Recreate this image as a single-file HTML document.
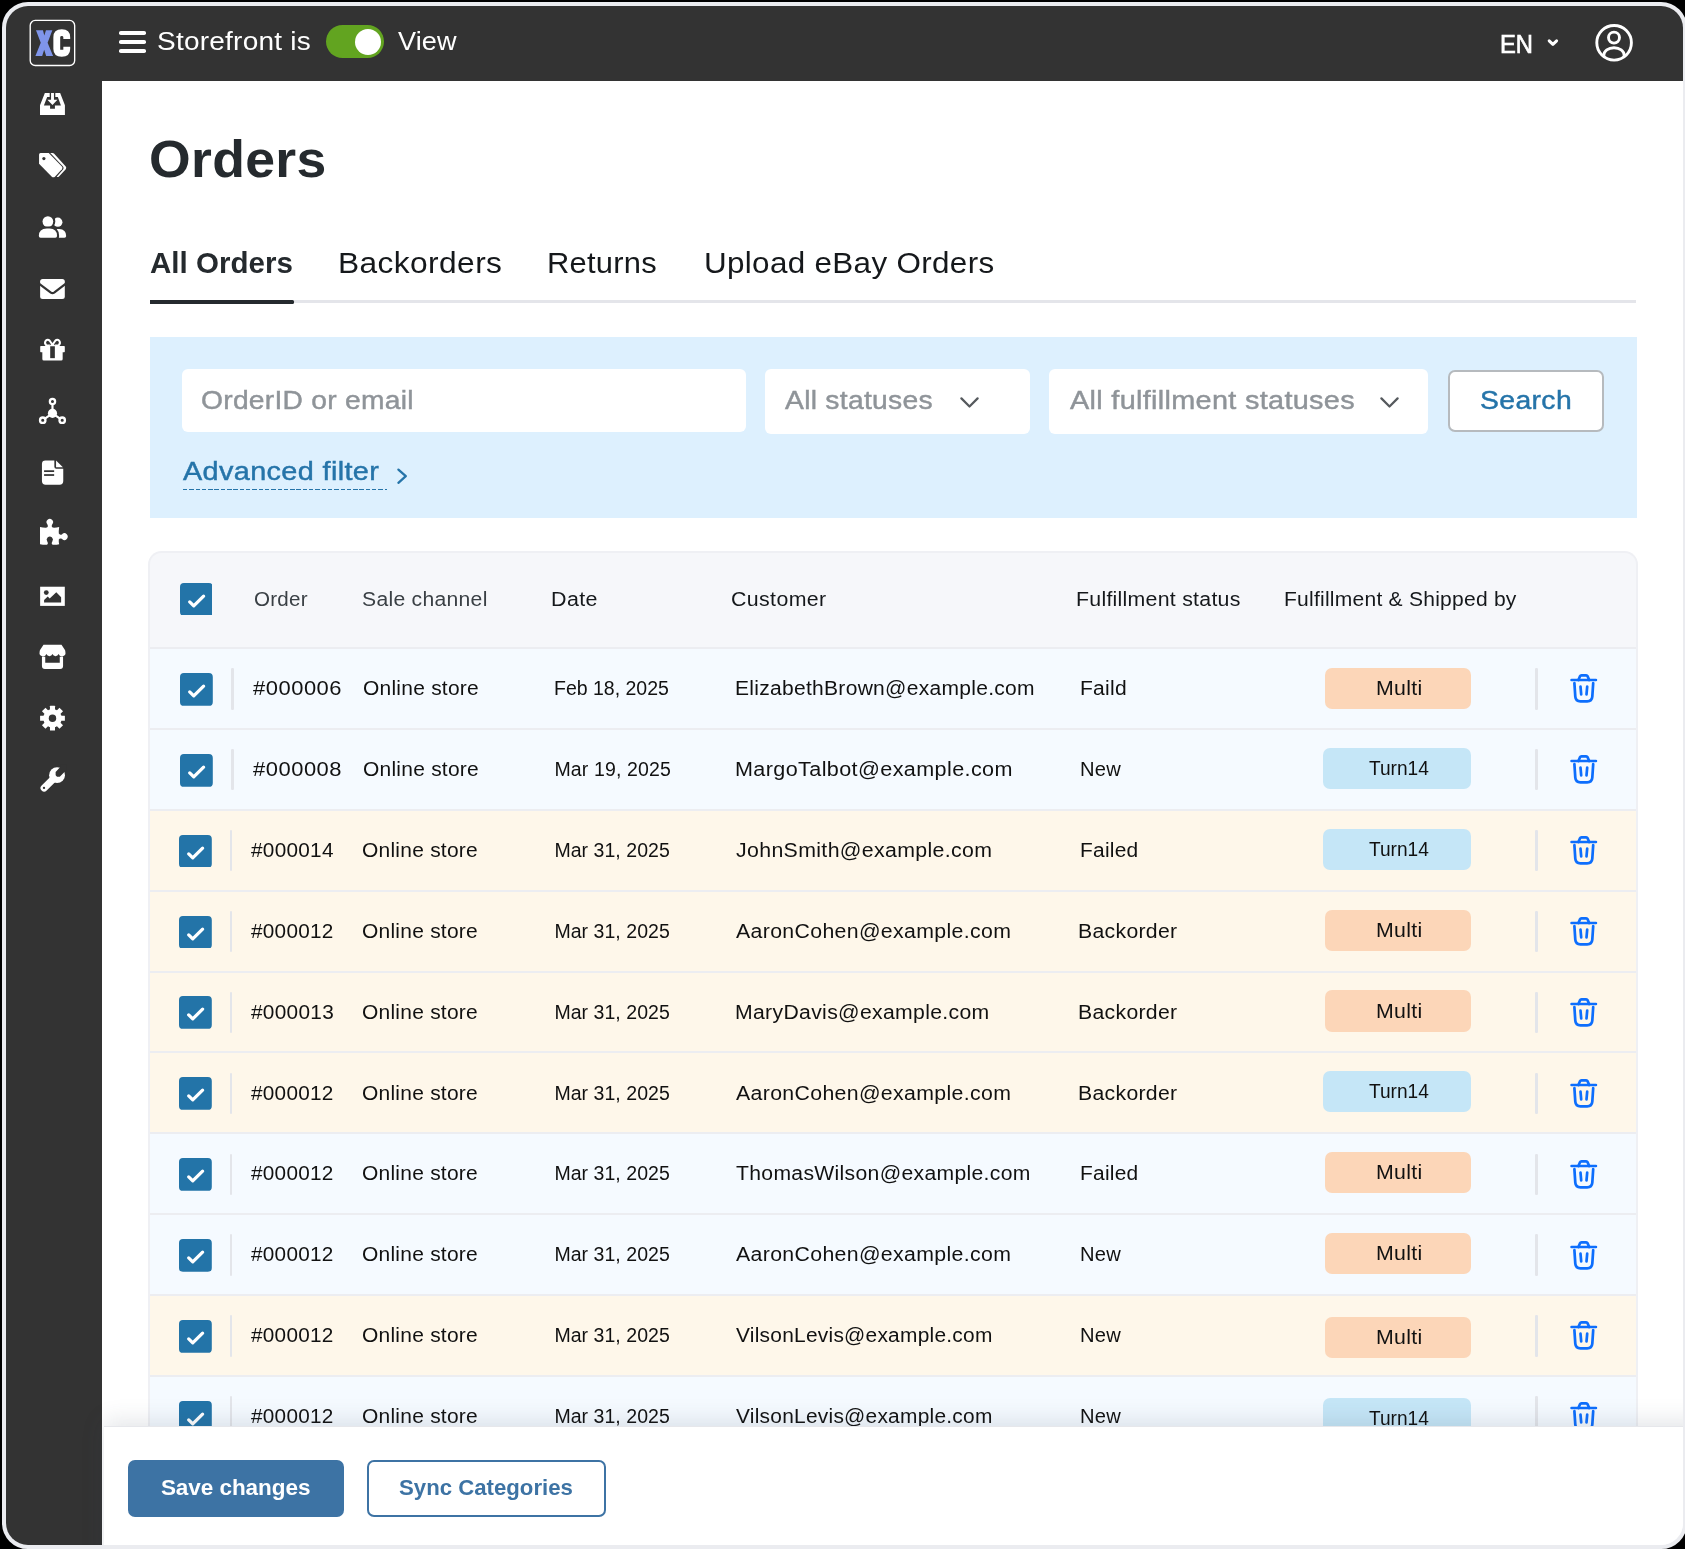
<!DOCTYPE html><html><head><meta charset="utf-8"><title>Orders</title><style>
html,body{margin:0;padding:0;background:#000;}
body{width:1685px;height:1549px;position:relative;overflow:hidden;font-family:"Liberation Sans", sans-serif;}
.a{position:absolute;display:block;}
.t{position:absolute;white-space:pre;line-height:1;display:block;}
#frame{left:2px;top:2px;width:1685px;height:1547.4px;box-sizing:border-box;border:4px solid #ebecf0;border-radius:26px;background:#ffffff;overflow:hidden;}
#page{left:-6px;top:-6px;width:1685px;height:1549px;will-change:transform;}

</style></head><body>
<div id="frame" class="a"><div id="page" class="a">
<div class="a" style="left:0;top:0;width:1685px;height:81px;background:#333333"></div>
<div class="a" style="left:0;top:0;width:102px;height:1549px;background:#333333"></div>
<div class="a" style="left:148px;top:551.1px;width:1489.6px;height:900px;border-radius:13.5px 13.5px 0 0;background:#eff0f4;"></div>
<div class="a" style="left:150px;top:552.8px;width:1485.8px;height:900px;border-radius:11.5px 11.5px 0 0;background:#f6f7fa;overflow:hidden">
<div class="a" style="left:0;top:94.35px;width:1486px;height:80.97px;background:#f5faff;border-top:2.8px solid #ecedf1;box-sizing:border-box"></div>
<div class="a" style="left:0;top:175.22px;width:1486px;height:80.97px;background:#f5faff;border-top:2.8px solid #ecedf1;box-sizing:border-box"></div>
<div class="a" style="left:0;top:256.09px;width:1486px;height:80.97px;background:#fef7ea;border-top:2.8px solid #ecedf1;box-sizing:border-box"></div>
<div class="a" style="left:0;top:336.96px;width:1486px;height:80.97px;background:#fef7ea;border-top:2.8px solid #ecedf1;box-sizing:border-box"></div>
<div class="a" style="left:0;top:417.83px;width:1486px;height:80.97px;background:#fef7ea;border-top:2.8px solid #ecedf1;box-sizing:border-box"></div>
<div class="a" style="left:0;top:498.70px;width:1486px;height:80.97px;background:#fef7ea;border-top:2.8px solid #ecedf1;box-sizing:border-box"></div>
<div class="a" style="left:0;top:579.57px;width:1486px;height:80.97px;background:#f5faff;border-top:2.8px solid #ecedf1;box-sizing:border-box"></div>
<div class="a" style="left:0;top:660.44px;width:1486px;height:80.97px;background:#f5faff;border-top:2.8px solid #ecedf1;box-sizing:border-box"></div>
<div class="a" style="left:0;top:741.31px;width:1486px;height:80.97px;background:#fef7ea;border-top:2.8px solid #ecedf1;box-sizing:border-box"></div>
<div class="a" style="left:0;top:822.18px;width:1486px;height:80.97px;background:#f5faff;border-top:2.8px solid #ecedf1;box-sizing:border-box"></div>
</div>
<svg class="a" style="left:179.60px;top:582.60px" width="32.8" height="32.8" viewBox="0 0 32.8 32.8"><rect width="32.8" height="32.8" rx="3.9" fill="#2374a8"/><path d="M9.7,18.9L13.75,22.9L23.6,13.1" fill="none" stroke="#fff" stroke-width="3.25" stroke-linecap="round" stroke-linejoin="round"/></svg>
<svg class="a" style="left:180.46px;top:672.88px" width="32.8" height="32.8" viewBox="0 0 32.8 32.8"><rect width="32.8" height="32.8" rx="3.9" fill="#2374a8"/><path d="M9.7,18.9L13.75,22.9L23.6,13.1" fill="none" stroke="#fff" stroke-width="3.25" stroke-linecap="round" stroke-linejoin="round"/></svg>
<div class="a" style="left:231.2px;top:668.38px;width:2.6px;height:41.2px;border-radius:1.3px;background:#e3e5ea"></div>
<div class="a" style="left:1324.5px;top:667.63px;width:146.5px;height:41.3px;border-radius:7px;background:#fcd6b8"></div>
<div class="a" style="left:1535.2px;top:668.38px;width:2.6px;height:41.2px;border-radius:1.3px;background:#e3e5ea"></div>
<svg class="a" style="left:1568.60px;top:672.48px" width="30" height="32" viewBox="0 0 30 32"><g fill="none" stroke="#0d6efd" stroke-width="2.7" stroke-linecap="round" stroke-linejoin="round"><path d="M2.6,8H26.9"/><path d="M9.4,8L10.9,4.4Q11.4,3.4 12.5,3.4H17.1Q18.2,3.4 18.7,4.4L20.2,8"/><path d="M5.4,11.2L6.3,24.6Q6.7,29.3 11.4,29.3H18.2Q22.9,29.3 23.3,24.6L24.2,11.2"/><path d="M11.5,14.6L12.2,22.4M18.2,14.6L17.5,22.4"/></g></svg>
<svg class="a" style="left:180.46px;top:753.75px" width="32.8" height="32.8" viewBox="0 0 32.8 32.8"><rect width="32.8" height="32.8" rx="3.9" fill="#2374a8"/><path d="M9.7,18.9L13.75,22.9L23.6,13.1" fill="none" stroke="#fff" stroke-width="3.25" stroke-linecap="round" stroke-linejoin="round"/></svg>
<div class="a" style="left:231.2px;top:749.25px;width:2.6px;height:41.2px;border-radius:1.3px;background:#e3e5ea"></div>
<div class="a" style="left:1323.2px;top:748.16px;width:147.79999999999995px;height:41.3px;border-radius:7px;background:#c5e6f7"></div>
<div class="a" style="left:1535.2px;top:749.25px;width:2.6px;height:41.2px;border-radius:1.3px;background:#e3e5ea"></div>
<svg class="a" style="left:1568.60px;top:753.36px" width="30" height="32" viewBox="0 0 30 32"><g fill="none" stroke="#0d6efd" stroke-width="2.7" stroke-linecap="round" stroke-linejoin="round"><path d="M2.6,8H26.9"/><path d="M9.4,8L10.9,4.4Q11.4,3.4 12.5,3.4H17.1Q18.2,3.4 18.7,4.4L20.2,8"/><path d="M5.4,11.2L6.3,24.6Q6.7,29.3 11.4,29.3H18.2Q22.9,29.3 23.3,24.6L24.2,11.2"/><path d="M11.5,14.6L12.2,22.4M18.2,14.6L17.5,22.4"/></g></svg>
<svg class="a" style="left:179.26px;top:834.62px" width="32.8" height="32.8" viewBox="0 0 32.8 32.8"><rect width="32.8" height="32.8" rx="3.9" fill="#2374a8"/><path d="M9.7,18.9L13.75,22.9L23.6,13.1" fill="none" stroke="#fff" stroke-width="3.25" stroke-linecap="round" stroke-linejoin="round"/></svg>
<div class="a" style="left:229.9px;top:830.12px;width:2.6px;height:41.2px;border-radius:1.3px;background:#e3e5ea"></div>
<div class="a" style="left:1323.2px;top:828.87px;width:147.79999999999995px;height:41.3px;border-radius:7px;background:#c5e6f7"></div>
<div class="a" style="left:1535.2px;top:830.12px;width:2.6px;height:41.2px;border-radius:1.3px;background:#e3e5ea"></div>
<svg class="a" style="left:1568.60px;top:834.22px" width="30" height="32" viewBox="0 0 30 32"><g fill="none" stroke="#0d6efd" stroke-width="2.7" stroke-linecap="round" stroke-linejoin="round"><path d="M2.6,8H26.9"/><path d="M9.4,8L10.9,4.4Q11.4,3.4 12.5,3.4H17.1Q18.2,3.4 18.7,4.4L20.2,8"/><path d="M5.4,11.2L6.3,24.6Q6.7,29.3 11.4,29.3H18.2Q22.9,29.3 23.3,24.6L24.2,11.2"/><path d="M11.5,14.6L12.2,22.4M18.2,14.6L17.5,22.4"/></g></svg>
<svg class="a" style="left:179.26px;top:915.50px" width="32.8" height="32.8" viewBox="0 0 32.8 32.8"><rect width="32.8" height="32.8" rx="3.9" fill="#2374a8"/><path d="M9.7,18.9L13.75,22.9L23.6,13.1" fill="none" stroke="#fff" stroke-width="3.25" stroke-linecap="round" stroke-linejoin="round"/></svg>
<div class="a" style="left:229.9px;top:911.00px;width:2.6px;height:41.2px;border-radius:1.3px;background:#e3e5ea"></div>
<div class="a" style="left:1324.5px;top:909.60px;width:146.5px;height:41.3px;border-radius:7px;background:#fcd6b8"></div>
<div class="a" style="left:1535.2px;top:911.00px;width:2.6px;height:41.2px;border-radius:1.3px;background:#e3e5ea"></div>
<svg class="a" style="left:1568.60px;top:915.10px" width="30" height="32" viewBox="0 0 30 32"><g fill="none" stroke="#0d6efd" stroke-width="2.7" stroke-linecap="round" stroke-linejoin="round"><path d="M2.6,8H26.9"/><path d="M9.4,8L10.9,4.4Q11.4,3.4 12.5,3.4H17.1Q18.2,3.4 18.7,4.4L20.2,8"/><path d="M5.4,11.2L6.3,24.6Q6.7,29.3 11.4,29.3H18.2Q22.9,29.3 23.3,24.6L24.2,11.2"/><path d="M11.5,14.6L12.2,22.4M18.2,14.6L17.5,22.4"/></g></svg>
<svg class="a" style="left:179.26px;top:996.36px" width="32.8" height="32.8" viewBox="0 0 32.8 32.8"><rect width="32.8" height="32.8" rx="3.9" fill="#2374a8"/><path d="M9.7,18.9L13.75,22.9L23.6,13.1" fill="none" stroke="#fff" stroke-width="3.25" stroke-linecap="round" stroke-linejoin="round"/></svg>
<div class="a" style="left:229.9px;top:991.86px;width:2.6px;height:41.2px;border-radius:1.3px;background:#e3e5ea"></div>
<div class="a" style="left:1324.5px;top:990.41px;width:146.5px;height:41.3px;border-radius:7px;background:#fcd6b8"></div>
<div class="a" style="left:1535.2px;top:991.86px;width:2.6px;height:41.2px;border-radius:1.3px;background:#e3e5ea"></div>
<svg class="a" style="left:1568.60px;top:995.96px" width="30" height="32" viewBox="0 0 30 32"><g fill="none" stroke="#0d6efd" stroke-width="2.7" stroke-linecap="round" stroke-linejoin="round"><path d="M2.6,8H26.9"/><path d="M9.4,8L10.9,4.4Q11.4,3.4 12.5,3.4H17.1Q18.2,3.4 18.7,4.4L20.2,8"/><path d="M5.4,11.2L6.3,24.6Q6.7,29.3 11.4,29.3H18.2Q22.9,29.3 23.3,24.6L24.2,11.2"/><path d="M11.5,14.6L12.2,22.4M18.2,14.6L17.5,22.4"/></g></svg>
<svg class="a" style="left:179.26px;top:1077.24px" width="32.8" height="32.8" viewBox="0 0 32.8 32.8"><rect width="32.8" height="32.8" rx="3.9" fill="#2374a8"/><path d="M9.7,18.9L13.75,22.9L23.6,13.1" fill="none" stroke="#fff" stroke-width="3.25" stroke-linecap="round" stroke-linejoin="round"/></svg>
<div class="a" style="left:229.9px;top:1072.74px;width:2.6px;height:41.2px;border-radius:1.3px;background:#e3e5ea"></div>
<div class="a" style="left:1323.2px;top:1070.98px;width:147.79999999999995px;height:41.3px;border-radius:7px;background:#c5e6f7"></div>
<div class="a" style="left:1535.2px;top:1072.74px;width:2.6px;height:41.2px;border-radius:1.3px;background:#e3e5ea"></div>
<svg class="a" style="left:1568.60px;top:1076.84px" width="30" height="32" viewBox="0 0 30 32"><g fill="none" stroke="#0d6efd" stroke-width="2.7" stroke-linecap="round" stroke-linejoin="round"><path d="M2.6,8H26.9"/><path d="M9.4,8L10.9,4.4Q11.4,3.4 12.5,3.4H17.1Q18.2,3.4 18.7,4.4L20.2,8"/><path d="M5.4,11.2L6.3,24.6Q6.7,29.3 11.4,29.3H18.2Q22.9,29.3 23.3,24.6L24.2,11.2"/><path d="M11.5,14.6L12.2,22.4M18.2,14.6L17.5,22.4"/></g></svg>
<svg class="a" style="left:179.26px;top:1158.11px" width="32.8" height="32.8" viewBox="0 0 32.8 32.8"><rect width="32.8" height="32.8" rx="3.9" fill="#2374a8"/><path d="M9.7,18.9L13.75,22.9L23.6,13.1" fill="none" stroke="#fff" stroke-width="3.25" stroke-linecap="round" stroke-linejoin="round"/></svg>
<div class="a" style="left:229.9px;top:1153.61px;width:2.6px;height:41.2px;border-radius:1.3px;background:#e3e5ea"></div>
<div class="a" style="left:1324.5px;top:1151.85px;width:146.5px;height:41.3px;border-radius:7px;background:#fcd6b8"></div>
<div class="a" style="left:1535.2px;top:1153.61px;width:2.6px;height:41.2px;border-radius:1.3px;background:#e3e5ea"></div>
<svg class="a" style="left:1568.60px;top:1157.70px" width="30" height="32" viewBox="0 0 30 32"><g fill="none" stroke="#0d6efd" stroke-width="2.7" stroke-linecap="round" stroke-linejoin="round"><path d="M2.6,8H26.9"/><path d="M9.4,8L10.9,4.4Q11.4,3.4 12.5,3.4H17.1Q18.2,3.4 18.7,4.4L20.2,8"/><path d="M5.4,11.2L6.3,24.6Q6.7,29.3 11.4,29.3H18.2Q22.9,29.3 23.3,24.6L24.2,11.2"/><path d="M11.5,14.6L12.2,22.4M18.2,14.6L17.5,22.4"/></g></svg>
<svg class="a" style="left:179.26px;top:1238.97px" width="32.8" height="32.8" viewBox="0 0 32.8 32.8"><rect width="32.8" height="32.8" rx="3.9" fill="#2374a8"/><path d="M9.7,18.9L13.75,22.9L23.6,13.1" fill="none" stroke="#fff" stroke-width="3.25" stroke-linecap="round" stroke-linejoin="round"/></svg>
<div class="a" style="left:229.9px;top:1234.47px;width:2.6px;height:41.2px;border-radius:1.3px;background:#e3e5ea"></div>
<div class="a" style="left:1324.5px;top:1232.62px;width:146.5px;height:41.3px;border-radius:7px;background:#fcd6b8"></div>
<div class="a" style="left:1535.2px;top:1234.47px;width:2.6px;height:41.2px;border-radius:1.3px;background:#e3e5ea"></div>
<svg class="a" style="left:1568.60px;top:1238.57px" width="30" height="32" viewBox="0 0 30 32"><g fill="none" stroke="#0d6efd" stroke-width="2.7" stroke-linecap="round" stroke-linejoin="round"><path d="M2.6,8H26.9"/><path d="M9.4,8L10.9,4.4Q11.4,3.4 12.5,3.4H17.1Q18.2,3.4 18.7,4.4L20.2,8"/><path d="M5.4,11.2L6.3,24.6Q6.7,29.3 11.4,29.3H18.2Q22.9,29.3 23.3,24.6L24.2,11.2"/><path d="M11.5,14.6L12.2,22.4M18.2,14.6L17.5,22.4"/></g></svg>
<svg class="a" style="left:179.26px;top:1319.85px" width="32.8" height="32.8" viewBox="0 0 32.8 32.8"><rect width="32.8" height="32.8" rx="3.9" fill="#2374a8"/><path d="M9.7,18.9L13.75,22.9L23.6,13.1" fill="none" stroke="#fff" stroke-width="3.25" stroke-linecap="round" stroke-linejoin="round"/></svg>
<div class="a" style="left:229.9px;top:1315.35px;width:2.6px;height:41.2px;border-radius:1.3px;background:#e3e5ea"></div>
<div class="a" style="left:1324.5px;top:1316.89px;width:146.5px;height:41.3px;border-radius:7px;background:#fcd6b8"></div>
<div class="a" style="left:1535.2px;top:1315.35px;width:2.6px;height:41.2px;border-radius:1.3px;background:#e3e5ea"></div>
<svg class="a" style="left:1568.60px;top:1319.44px" width="30" height="32" viewBox="0 0 30 32"><g fill="none" stroke="#0d6efd" stroke-width="2.7" stroke-linecap="round" stroke-linejoin="round"><path d="M2.6,8H26.9"/><path d="M9.4,8L10.9,4.4Q11.4,3.4 12.5,3.4H17.1Q18.2,3.4 18.7,4.4L20.2,8"/><path d="M5.4,11.2L6.3,24.6Q6.7,29.3 11.4,29.3H18.2Q22.9,29.3 23.3,24.6L24.2,11.2"/><path d="M11.5,14.6L12.2,22.4M18.2,14.6L17.5,22.4"/></g></svg>
<svg class="a" style="left:179.26px;top:1400.72px" width="32.8" height="32.8" viewBox="0 0 32.8 32.8"><rect width="32.8" height="32.8" rx="3.9" fill="#2374a8"/><path d="M9.7,18.9L13.75,22.9L23.6,13.1" fill="none" stroke="#fff" stroke-width="3.25" stroke-linecap="round" stroke-linejoin="round"/></svg>
<div class="a" style="left:229.9px;top:1396.22px;width:2.6px;height:41.2px;border-radius:1.3px;background:#e3e5ea"></div>
<div class="a" style="left:1323.2px;top:1397.76px;width:147.79999999999995px;height:41.3px;border-radius:7px;background:#c5e6f7"></div>
<div class="a" style="left:1535.2px;top:1396.22px;width:2.6px;height:41.2px;border-radius:1.3px;background:#e3e5ea"></div>
<svg class="a" style="left:1568.60px;top:1400.32px" width="30" height="32" viewBox="0 0 30 32"><g fill="none" stroke="#0d6efd" stroke-width="2.7" stroke-linecap="round" stroke-linejoin="round"><path d="M2.6,8H26.9"/><path d="M9.4,8L10.9,4.4Q11.4,3.4 12.5,3.4H17.1Q18.2,3.4 18.7,4.4L20.2,8"/><path d="M5.4,11.2L6.3,24.6Q6.7,29.3 11.4,29.3H18.2Q22.9,29.3 23.3,24.6L24.2,11.2"/><path d="M11.5,14.6L12.2,22.4M18.2,14.6L17.5,22.4"/></g></svg>
<div class="a" style="left:150px;top:300.2px;width:1486px;height:3.3px;background:#e4e5ea"></div>
<div class="a" style="left:150px;top:300px;width:143.5px;height:3.6px;background:#252a2e;border-radius:0 1.5px 1.5px 0"></div>
<div class="a" style="left:149.5px;top:337px;width:1487px;height:180.5px;background:#ddf0fe"></div>
<div class="a" style="left:182px;top:369px;width:563.5px;height:63px;border-radius:6px;background:#ffffff"></div>
<div class="a" style="left:765px;top:369px;width:265px;height:65px;border-radius:6px;background:#ffffff"></div>
<div class="a" style="left:1049px;top:369px;width:379px;height:65px;border-radius:6px;background:#ffffff"></div>
<div class="a" style="left:1447.5px;top:369.5px;width:156px;height:62.5px;box-sizing:border-box;border:2.2px solid #b6babe;border-radius:7px;background:#ffffff"></div>
<svg class="a" style="left:959.5px;top:397px" width="19" height="11.2" viewBox="0 0 19 11.2"><path d="M1.4000000000000001,1.4000000000000001L9.5,9.5L17.599999999999998,1.4000000000000001" fill="none" stroke="#55595d" stroke-width="2.2" stroke-linecap="round" stroke-linejoin="round"/></svg>
<svg class="a" style="left:1380.3px;top:397px" width="19" height="11.2" viewBox="0 0 19 11.2"><path d="M1.4000000000000001,1.4000000000000001L9.5,9.5L17.599999999999998,1.4000000000000001" fill="none" stroke="#55595d" stroke-width="2.2" stroke-linecap="round" stroke-linejoin="round"/></svg>
<div class="a" style="left:183px;top:488.9px;width:204px;height:1.1px;background:repeating-linear-gradient(90deg,#2574a9 0 4.4px,transparent 4.4px 6.3px)"></div>
<svg class="a" style="left:396px;top:467px" width="13" height="18" viewBox="0 0 13 18"><path d="M2.4,2.6L9.8,9.2L2.4,15.8" fill="none" stroke="#2574a9" stroke-width="2.3" stroke-linecap="round" stroke-linejoin="round"/></svg>
<svg class="a" style="left:0;top:0" width="110" height="110" viewBox="0 0 1544 1544"><rect x="424" y="287" width="624" height="632" rx="70" fill="none" stroke="#fff" stroke-width="19"/><path fill="#7f95ea" d="M505,425H603L622,500L645,425H735L668,600L745,785H648L620,700L592,785H497L572,600Z"/><path fill="none" stroke="#fff" stroke-width="96" d="M937,548V522Q937,458 867,458Q797,458 797,522V688Q797,748 867,748Q937,748 937,688V655"/></svg>
<div class="a" style="left:119px;top:31.0px;width:27px;height:3.5px;border-radius:1.8px;background:#fff"></div>
<div class="a" style="left:119px;top:40.0px;width:27px;height:3.5px;border-radius:1.8px;background:#fff"></div>
<div class="a" style="left:119px;top:49.0px;width:27px;height:3.5px;border-radius:1.8px;background:#fff"></div>
<div class="a" style="left:326px;top:25px;width:58.3px;height:33.2px;border-radius:17px;background:#62a420"></div>
<div class="a" style="left:355px;top:28.6px;width:26.2px;height:26.2px;border-radius:50%;background:#fff"></div>
<svg class="a" style="left:1546px;top:37px" width="14" height="12" viewBox="0 0 14 12"><path d="M3.2,3.9L6.9,7.4L10.6,3.9" fill="none" stroke="#fff" stroke-width="3" stroke-linecap="round" stroke-linejoin="round"/></svg>
<svg class="a" style="left:1592px;top:21px" width="44" height="44" viewBox="0 0 44 44"><defs><clipPath id="uc"><circle cx="22.1" cy="21.8" r="17.3"/></clipPath></defs><g fill="none" stroke="#fff" stroke-width="2.9"><circle cx="22.1" cy="21.8" r="17.3"/><circle cx="22" cy="16.6" r="5.5"/><ellipse cx="22" cy="34.3" rx="10.2" ry="7.6" clip-path="url(#uc)"/></g></svg>
<svg class="a" style="left:22px;top:82px" width="60" height="60" viewBox="0 0 1549 1549" ><path fill="#fff" d="M590,285H715V390H650L565,605H725V690H850V605H1005L925,390H860V285H985L1108,600V855H465V600Z"/><path fill="#fff" d="M750,285H825V460H915L787,595L655,460H750Z"/></svg>
<svg class="a" style="left:22px;top:135px" width="60" height="60" viewBox="0 0 1549 1549" ><path fill="#fff" d="M480,465H690L1030,815Q1060,850 1030,885L850,1075Q810,1105 770,1075L440,740V505Q440,465 480,465Z"/><circle cx="565" cy="607" r="42" fill="#333333"/><path fill="#fff" d="M730,465H790Q810,465 825,480L1130,815Q1155,850 1130,885L955,1070Q925,1095 895,1075L1060,890Q1090,850 1060,815Z"/></svg>
<svg class="a" style="left:22px;top:197px" width="60" height="60" viewBox="0 0 1549 1549" ><circle cx="925" cy="650" r="118" fill="#fff"/><path fill="#fff" d="M880,825H960Q1140,830 1140,1010Q1140,1055 1095,1055H900Z"/><circle cx="668" cy="635" r="138" fill="#fff" stroke="#333333" stroke-width="108" paint-order="stroke"/><path fill="#fff" stroke="#333333" stroke-width="108" paint-order="stroke" d="M435,1010Q435,815 640,815H710Q905,815 905,1010Q905,1055 860,1055H480Q435,1055 435,1010Z"/></svg>
<svg class="a" style="left:22px;top:259px" width="60" height="60" viewBox="0 0 1549 1549" ><rect x="468" y="515" width="637" height="520" rx="65" fill="#fff"/><path fill="none" stroke="#333333" stroke-width="58" stroke-linejoin="round" d="M420,625L745,868Q787,898 829,868L1150,625"/></svg>
<svg class="a" style="left:22px;top:320px" width="60" height="60" viewBox="0 0 1549 1549" ><rect x="470" y="670" width="635" height="160" rx="18" fill="#fff"/><path fill="#fff" d="M525,820H1050V1005Q1050,1045 1010,1045H565Q525,1045 525,1005Z"/><path fill="#fff" d="M700,680L787,588L875,680Z"/><rect x="728" y="678" width="120" height="307" fill="#333333"/><path fill="none" stroke="#fff" stroke-width="52" stroke-linejoin="round" d="M787,640L715,535Q665,480 612,535Q570,595 625,650L720,660"/><path fill="none" stroke="#fff" stroke-width="52" stroke-linejoin="round" d="M787,640L859,535Q909,480 962,535Q1004,595 949,650L854,660"/></svg>
<svg class="a" style="left:22px;top:381px" width="60" height="60" viewBox="0 0 1549 1549" ><path stroke="#fff" stroke-width="56" fill="none" d="M787,835V527M787,835L535,1012M787,835L1038,1012"/><circle cx="787" cy="835" r="118" fill="#fff"/><circle cx="787" cy="527" r="68" fill="#333333" stroke="#fff" stroke-width="58"/><circle cx="535" cy="1012" r="70" fill="#333333" stroke="#fff" stroke-width="60"/><circle cx="1038" cy="1012" r="70" fill="#333333" stroke="#fff" stroke-width="60"/></svg>
<svg class="a" style="left:22px;top:442px" width="60" height="60" viewBox="0 0 1549 1549" ><path fill="#fff" d="M605,475H835V640Q835,690 885,690H1065V1010Q1065,1105 970,1105H610Q515,1105 515,1010V565Q515,475 605,475Z"/><path fill="#fff" d="M880,480L1055,655H880Z"/><rect x="570" y="730" width="260" height="45" fill="#333333"/><rect x="570" y="830" width="260" height="45" fill="#333333"/></svg>
<svg class="a" style="left:22px;top:503px" width="60" height="60" viewBox="0 0 1549 1549" ><path fill="#fff" d="M465,620Q560,640 640,635Q690,620 650,545A84,84 0 1 1 785,545Q745,620 795,635Q880,640 960,620Q945,720 950,790Q975,835 1030,810A82,92 0 1 1 1030,925Q975,900 950,945Q945,1000 960,1065Q880,1085 795,1080Q745,1060 785,990A80,80 0 1 0 650,990Q690,1060 640,1080Q560,1085 465,1065Z"/></svg>
<svg class="a" style="left:22px;top:566px" width="60" height="60" viewBox="0 0 1549 1549" ><rect x="468" y="535" width="637" height="495" fill="#fff"/><circle cx="627" cy="685" r="62" fill="#333333"/><path fill="#333333" d="M570,945V880L665,785L715,840L885,675L1010,805V945Z"/></svg>
<svg class="a" style="left:22px;top:627px" width="60" height="60" viewBox="0 0 1549 1549" ><path fill="#fff" d="M555,460H1020L1105,590Q1120,615 1120,645A92,92 0 0 1 945,700A85,85 0 0 1 787,700A85,85 0 0 1 630,700A92,92 0 0 1 455,645Q455,615 470,590Z"/><path fill="#fff" d="M515,770H600V925H975V770H1060V1010Q1060,1085 985,1085H590Q515,1085 515,1010Z"/></svg>
<svg class="a" style="left:22px;top:688px" width="60" height="60" viewBox="0 0 1549 1549" ><g fill="#fff"><circle cx="787" cy="780" r="238"/><rect x="722" y="460" width="130" height="640" rx="8" transform="rotate(0 787 780)"/><rect x="722" y="460" width="130" height="640" rx="8" transform="rotate(45 787 780)"/><rect x="722" y="460" width="130" height="640" rx="8" transform="rotate(90 787 780)"/><rect x="722" y="460" width="130" height="640" rx="8" transform="rotate(135 787 780)"/></g><circle cx="787" cy="780" r="96" fill="#333333"/></svg>
<svg class="a" style="left:22px;top:749px" width="60" height="60" viewBox="0 0 1549 1549" ><circle cx="905" cy="675" r="205" fill="#fff"/><path fill="#333333" d="M1000,455L868,595V715H975L1110,580L1160,640V400H1000Z"/><path stroke="#fff" stroke-width="185" stroke-linecap="round" d="M820,760L572,1005"/><circle cx="568" cy="1005" r="30" fill="#333333"/></svg>
<span class="t" style="left:156.94px;top:28px;font-size:26.5px;letter-spacing:0.213px;color:#ffffff;transform:scaleX(1.0571);transform-origin:0 0;">Storefront is</span>
<span class="t" style="left:398.30px;top:28px;font-size:26.5px;letter-spacing:0.137px;color:#ffffff;transform:scaleX(1.0218);transform-origin:0 0;">View</span>
<span class="t" style="left:1500.21px;top:31px;font-size:26.5px;letter-spacing:0.000px;color:#ffffff;-webkit-text-stroke:0.7px #ffffff;transform:scaleX(0.8967);transform-origin:0 0;">EN</span>
<span class="t" style="left:149.24px;top:133px;font-size:52px;letter-spacing:0.325px;color:#252a2e;font-weight:700;transform:scaleX(1.0301);transform-origin:0 0;">Orders</span>
<span class="t" style="left:150.00px;top:248px;font-size:29.5px;letter-spacing:0.031px;color:#252a2e;font-weight:700;">All Orders</span>
<span class="t" style="left:337.85px;top:248px;font-size:29.5px;letter-spacing:0.376px;color:#15181b;transform:scaleX(1.0745);transform-origin:0 0;">Backorders</span>
<span class="t" style="left:547.31px;top:248px;font-size:29.5px;letter-spacing:0.249px;color:#15181b;transform:scaleX(1.0467);transform-origin:0 0;">Returns</span>
<span class="t" style="left:704.47px;top:248px;font-size:29.5px;letter-spacing:0.313px;color:#15181b;transform:scaleX(1.0643);transform-origin:0 0;">Upload eBay Orders</span>
<span class="t" style="left:200.74px;top:387px;font-size:26.5px;letter-spacing:0.261px;color:#8f9499;-webkit-text-stroke:0.45px #8f9499;transform:scaleX(1.0643);transform-origin:0 0;">OrderID or email</span>
<span class="t" style="left:785.40px;top:387px;font-size:26.5px;letter-spacing:0.257px;color:#8f9499;-webkit-text-stroke:0.45px #8f9499;transform:scaleX(1.0668);transform-origin:0 0;">All statuses</span>
<span class="t" style="left:1070.00px;top:387px;font-size:26.5px;letter-spacing:0.297px;color:#8f9499;-webkit-text-stroke:0.45px #8f9499;transform:scaleX(1.0877);transform-origin:0 0;">All fulfillment statuses</span>
<span class="t" style="left:1479.53px;top:387px;font-size:26.5px;letter-spacing:0.354px;color:#2574a9;-webkit-text-stroke:0.45px #2574a9;transform:scaleX(1.0691);transform-origin:0 0;">Search</span>
<span class="t" style="left:183.10px;top:458px;font-size:26.5px;letter-spacing:0.337px;color:#2574a9;-webkit-text-stroke:0.45px #2574a9;transform:scaleX(1.0878);transform-origin:0 0;">Advanced filter</span>
<span class="t" style="left:253.70px;top:590px;font-size:19.5px;letter-spacing:0.222px;color:#3a4045;transform:scaleX(1.0558);transform-origin:0 0;">Order</span>
<span class="t" style="left:362.20px;top:590px;font-size:19.5px;letter-spacing:0.264px;color:#3a4045;transform:scaleX(1.0839);transform-origin:0 0;">Sale channel</span>
<span class="t" style="left:551.20px;top:590px;font-size:19.5px;letter-spacing:0.391px;color:#15181b;transform:scaleX(1.0983);transform-origin:0 0;">Date</span>
<span class="t" style="left:730.70px;top:590px;font-size:19.5px;letter-spacing:0.348px;color:#15181b;transform:scaleX(1.0941);transform-origin:0 0;">Customer</span>
<span class="t" style="left:1076.11px;top:590px;font-size:19.5px;letter-spacing:0.242px;color:#15181b;transform:scaleX(1.0925);transform-origin:0 0;">Fulfillment status</span>
<span class="t" style="left:1284.42px;top:590px;font-size:19.5px;letter-spacing:0.222px;color:#15181b;transform:scaleX(1.0790);transform-origin:0 0;">Fulfillment &amp; Shipped by</span>
<span class="t" style="left:252.50px;top:679px;font-size:19.5px;letter-spacing:0.464px;color:#111;transform:scaleX(1.1252);transform-origin:0 0;">#000006</span>
<span class="t" style="left:362.62px;top:679px;font-size:19.5px;letter-spacing:0.222px;color:#111;transform:scaleX(1.0756);transform-origin:0 0;">Online store</span>
<span class="t" style="left:554.00px;top:679px;font-size:19.5px;letter-spacing:-0.007px;color:#111;">Feb 18, 2025</span>
<span class="t" style="left:734.92px;top:679px;font-size:19.5px;letter-spacing:0.261px;color:#111;transform:scaleX(1.0786);transform-origin:0 0;">ElizabethBrown@example.com</span>
<span class="t" style="left:1079.62px;top:679px;font-size:19.5px;letter-spacing:0.248px;color:#111;transform:scaleX(1.0794);transform-origin:0 0;">Faild</span>
<span class="t" style="left:1375.61px;top:679px;font-size:19.5px;letter-spacing:0.278px;color:#111;transform:scaleX(1.0915);transform-origin:0 0;">Multi</span>
<span class="t" style="left:252.50px;top:760px;font-size:19.5px;letter-spacing:0.464px;color:#111;transform:scaleX(1.1252);transform-origin:0 0;">#000008</span>
<span class="t" style="left:362.62px;top:760px;font-size:19.5px;letter-spacing:0.222px;color:#111;transform:scaleX(1.0756);transform-origin:0 0;">Online store</span>
<span class="t" style="left:554.40px;top:760px;font-size:19.5px;letter-spacing:0.140px;color:#111;">Mar 19, 2025</span>
<span class="t" style="left:734.89px;top:760px;font-size:19.5px;letter-spacing:0.351px;color:#111;transform:scaleX(1.1064);transform-origin:0 0;">MargoTalbot@example.com</span>
<span class="t" style="left:1079.77px;top:760px;font-size:19.5px;letter-spacing:0.203px;color:#111;transform:scaleX(1.0322);transform-origin:0 0;">New</span>
<span class="t" style="left:1368.50px;top:759px;font-size:19.5px;letter-spacing:0.000px;color:#111;transform:scaleX(0.9801);transform-origin:0 0;">Turn14</span>
<span class="t" style="left:251.30px;top:841px;font-size:19.5px;letter-spacing:0.256px;color:#111;transform:scaleX(1.0644);transform-origin:0 0;">#000014</span>
<span class="t" style="left:361.90px;top:841px;font-size:19.5px;letter-spacing:0.222px;color:#111;transform:scaleX(1.0756);transform-origin:0 0;">Online store</span>
<span class="t" style="left:554.40px;top:841px;font-size:19.5px;letter-spacing:0.049px;color:#111;">Mar 31, 2025</span>
<span class="t" style="left:736.00px;top:841px;font-size:19.5px;letter-spacing:0.321px;color:#111;transform:scaleX(1.0928);transform-origin:0 0;">JohnSmith@example.com</span>
<span class="t" style="left:1079.73px;top:841px;font-size:19.5px;letter-spacing:0.230px;color:#111;transform:scaleX(1.0722);transform-origin:0 0;">Failed</span>
<span class="t" style="left:1368.50px;top:840px;font-size:19.5px;letter-spacing:0.000px;color:#111;transform:scaleX(0.9801);transform-origin:0 0;">Turn14</span>
<span class="t" style="left:251.30px;top:922px;font-size:19.5px;letter-spacing:0.248px;color:#111;transform:scaleX(1.0632);transform-origin:0 0;">#000012</span>
<span class="t" style="left:361.90px;top:922px;font-size:19.5px;letter-spacing:0.222px;color:#111;transform:scaleX(1.0756);transform-origin:0 0;">Online store</span>
<span class="t" style="left:554.40px;top:922px;font-size:19.5px;letter-spacing:0.049px;color:#111;">Mar 31, 2025</span>
<span class="t" style="left:736.00px;top:922px;font-size:19.5px;letter-spacing:0.322px;color:#111;transform:scaleX(1.0906);transform-origin:0 0;">AaronCohen@example.com</span>
<span class="t" style="left:1077.91px;top:922px;font-size:19.5px;letter-spacing:0.294px;color:#111;transform:scaleX(1.0867);transform-origin:0 0;">Backorder</span>
<span class="t" style="left:1375.61px;top:921px;font-size:19.5px;letter-spacing:0.278px;color:#111;transform:scaleX(1.0915);transform-origin:0 0;">Multi</span>
<span class="t" style="left:251.30px;top:1003px;font-size:19.5px;letter-spacing:0.263px;color:#111;transform:scaleX(1.0672);transform-origin:0 0;">#000013</span>
<span class="t" style="left:361.90px;top:1003px;font-size:19.5px;letter-spacing:0.222px;color:#111;transform:scaleX(1.0756);transform-origin:0 0;">Online store</span>
<span class="t" style="left:554.40px;top:1003px;font-size:19.5px;letter-spacing:0.049px;color:#111;">Mar 31, 2025</span>
<span class="t" style="left:734.91px;top:1003px;font-size:19.5px;letter-spacing:0.301px;color:#111;transform:scaleX(1.0871);transform-origin:0 0;">MaryDavis@example.com</span>
<span class="t" style="left:1077.91px;top:1003px;font-size:19.5px;letter-spacing:0.294px;color:#111;transform:scaleX(1.0867);transform-origin:0 0;">Backorder</span>
<span class="t" style="left:1375.61px;top:1002px;font-size:19.5px;letter-spacing:0.278px;color:#111;transform:scaleX(1.0915);transform-origin:0 0;">Multi</span>
<span class="t" style="left:251.30px;top:1084px;font-size:19.5px;letter-spacing:0.248px;color:#111;transform:scaleX(1.0632);transform-origin:0 0;">#000012</span>
<span class="t" style="left:361.90px;top:1084px;font-size:19.5px;letter-spacing:0.222px;color:#111;transform:scaleX(1.0756);transform-origin:0 0;">Online store</span>
<span class="t" style="left:554.40px;top:1084px;font-size:19.5px;letter-spacing:0.049px;color:#111;">Mar 31, 2025</span>
<span class="t" style="left:736.00px;top:1084px;font-size:19.5px;letter-spacing:0.322px;color:#111;transform:scaleX(1.0906);transform-origin:0 0;">AaronCohen@example.com</span>
<span class="t" style="left:1077.91px;top:1084px;font-size:19.5px;letter-spacing:0.294px;color:#111;transform:scaleX(1.0867);transform-origin:0 0;">Backorder</span>
<span class="t" style="left:1368.50px;top:1082px;font-size:19.5px;letter-spacing:0.000px;color:#111;transform:scaleX(0.9801);transform-origin:0 0;">Turn14</span>
<span class="t" style="left:251.30px;top:1164px;font-size:19.5px;letter-spacing:0.248px;color:#111;transform:scaleX(1.0632);transform-origin:0 0;">#000012</span>
<span class="t" style="left:361.90px;top:1164px;font-size:19.5px;letter-spacing:0.222px;color:#111;transform:scaleX(1.0756);transform-origin:0 0;">Online store</span>
<span class="t" style="left:554.40px;top:1164px;font-size:19.5px;letter-spacing:0.049px;color:#111;">Mar 31, 2025</span>
<span class="t" style="left:736.00px;top:1164px;font-size:19.5px;letter-spacing:0.296px;color:#111;transform:scaleX(1.0841);transform-origin:0 0;">ThomasWilson@example.com</span>
<span class="t" style="left:1079.73px;top:1164px;font-size:19.5px;letter-spacing:0.230px;color:#111;transform:scaleX(1.0722);transform-origin:0 0;">Failed</span>
<span class="t" style="left:1375.61px;top:1163px;font-size:19.5px;letter-spacing:0.278px;color:#111;transform:scaleX(1.0915);transform-origin:0 0;">Multi</span>
<span class="t" style="left:251.30px;top:1245px;font-size:19.5px;letter-spacing:0.248px;color:#111;transform:scaleX(1.0632);transform-origin:0 0;">#000012</span>
<span class="t" style="left:361.90px;top:1245px;font-size:19.5px;letter-spacing:0.222px;color:#111;transform:scaleX(1.0756);transform-origin:0 0;">Online store</span>
<span class="t" style="left:554.40px;top:1245px;font-size:19.5px;letter-spacing:0.049px;color:#111;">Mar 31, 2025</span>
<span class="t" style="left:736.00px;top:1245px;font-size:19.5px;letter-spacing:0.322px;color:#111;transform:scaleX(1.0906);transform-origin:0 0;">AaronCohen@example.com</span>
<span class="t" style="left:1079.77px;top:1245px;font-size:19.5px;letter-spacing:0.203px;color:#111;transform:scaleX(1.0322);transform-origin:0 0;">New</span>
<span class="t" style="left:1375.61px;top:1244px;font-size:19.5px;letter-spacing:0.278px;color:#111;transform:scaleX(1.0915);transform-origin:0 0;">Multi</span>
<span class="t" style="left:251.30px;top:1326px;font-size:19.5px;letter-spacing:0.248px;color:#111;transform:scaleX(1.0632);transform-origin:0 0;">#000012</span>
<span class="t" style="left:361.90px;top:1326px;font-size:19.5px;letter-spacing:0.222px;color:#111;transform:scaleX(1.0756);transform-origin:0 0;">Online store</span>
<span class="t" style="left:554.40px;top:1326px;font-size:19.5px;letter-spacing:0.049px;color:#111;">Mar 31, 2025</span>
<span class="t" style="left:736.00px;top:1326px;font-size:19.5px;letter-spacing:0.235px;color:#111;transform:scaleX(1.0715);transform-origin:0 0;">VilsonLevis@example.com</span>
<span class="t" style="left:1079.77px;top:1326px;font-size:19.5px;letter-spacing:0.203px;color:#111;transform:scaleX(1.0322);transform-origin:0 0;">New</span>
<span class="t" style="left:1375.61px;top:1328px;font-size:19.5px;letter-spacing:0.278px;color:#111;transform:scaleX(1.0915);transform-origin:0 0;">Multi</span>
<span class="t" style="left:251.30px;top:1407px;font-size:19.5px;letter-spacing:0.248px;color:#111;transform:scaleX(1.0632);transform-origin:0 0;">#000012</span>
<span class="t" style="left:361.90px;top:1407px;font-size:19.5px;letter-spacing:0.222px;color:#111;transform:scaleX(1.0756);transform-origin:0 0;">Online store</span>
<span class="t" style="left:554.40px;top:1407px;font-size:19.5px;letter-spacing:0.049px;color:#111;">Mar 31, 2025</span>
<span class="t" style="left:736.00px;top:1407px;font-size:19.5px;letter-spacing:0.235px;color:#111;transform:scaleX(1.0715);transform-origin:0 0;">VilsonLevis@example.com</span>
<span class="t" style="left:1079.77px;top:1407px;font-size:19.5px;letter-spacing:0.203px;color:#111;transform:scaleX(1.0322);transform-origin:0 0;">New</span>
<span class="t" style="left:1368.50px;top:1409px;font-size:19.5px;letter-spacing:0.000px;color:#111;transform:scaleX(0.9801);transform-origin:0 0;">Turn14</span>
<div class="a" style="left:104px;top:1425.5px;width:1600px;height:140px;background:#ffffff;border-top:1.2px solid #e6e7eb;box-shadow:0 -5px 22px rgba(60,70,90,.14)"></div>
<div class="a" style="left:128.2px;top:1460.3px;width:215.4px;height:56.4px;border-radius:7px;background:#3d73a4"></div>
<div class="a" style="left:367px;top:1460.3px;width:238.8px;height:56.4px;box-sizing:border-box;border:2.4px solid #3d73a4;border-radius:7px;background:#ffffff"></div>
<span class="t" style="left:160.90px;top:1477px;font-size:22.5px;letter-spacing:-0.052px;color:#ffffff;font-weight:700;">Save changes</span>
<span class="t" style="left:398.70px;top:1477px;font-size:22.5px;letter-spacing:0.000px;color:#3d73a4;font-weight:700;transform:scaleX(0.9863);transform-origin:0 0;">Sync Categories</span>
</div></div></body></html>
